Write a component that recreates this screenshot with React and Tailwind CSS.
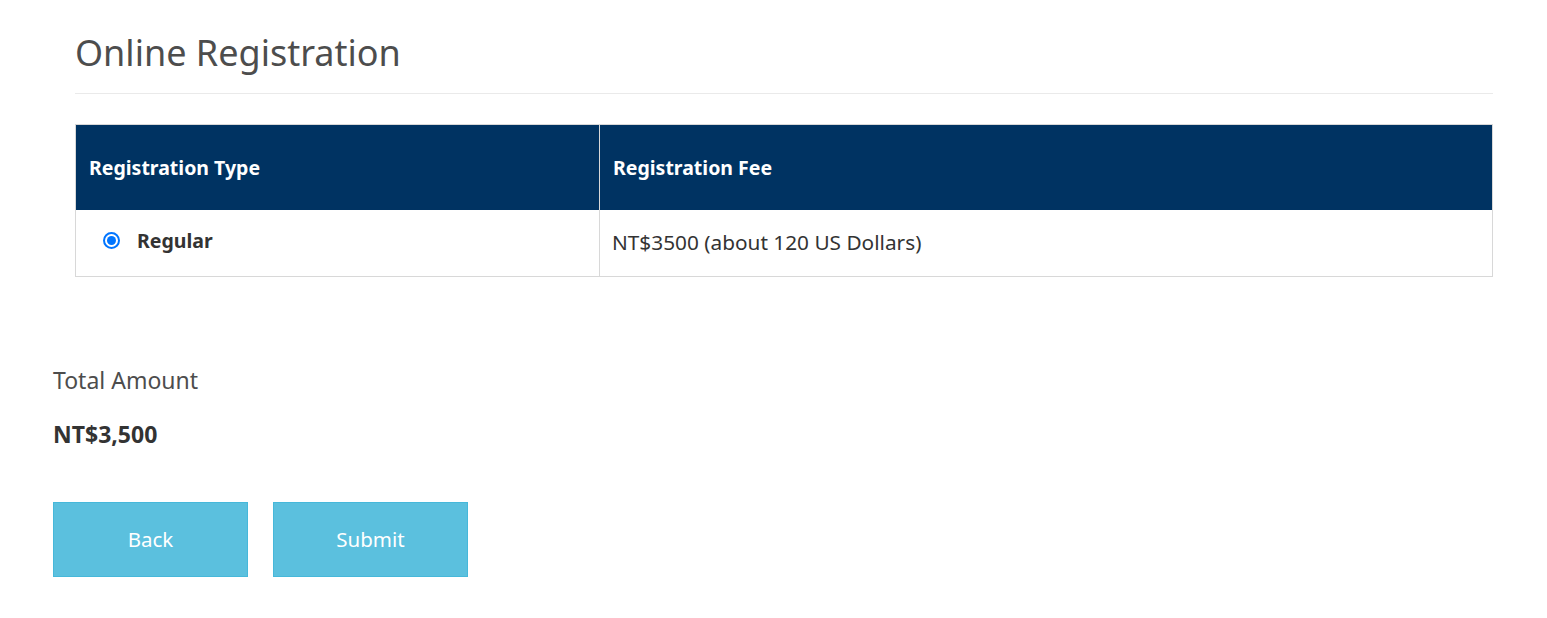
export default function App() {
  return (
    <div className="min-h-screen bg-white text-[#333] pl-[53px] pr-[54px] pt-[28px]" style={{ fontFamily: '"Noto Sans", "Open Sans", sans-serif' }}>
      <div className="pl-[22px]">
        <h1 className="text-[36px] leading-[50px] text-[#4d4d4d] pb-[15px] border-b border-[#eaeaea]">
          Online Registration
        </h1>

        <table className="w-full mt-[30px] border-collapse border border-[#d8d8d8]">
          <thead>
            <tr className="bg-[#003362] text-white h-[85px]">
              <th className="w-[524px] text-left font-bold text-[19.5px] px-[13px] border-r border-[#d8d8d8]">Registration Type</th>
              <th className="text-left font-bold text-[19.5px] px-[13px]">Registration Fee</th>
            </tr>
          </thead>
          <tbody>
            <tr className="h-[67px]">
              <td className="px-[27px] align-middle border-r border-[#d8d8d8]">
                <label className="flex items-center gap-[17px] -mt-[4px]">
                  <span className="w-[17px] h-[17px] rounded-full border-2 border-[#0075ff] flex items-center justify-center">
                    <span className="w-[9px] h-[9px] rounded-full bg-[#0075ff]"></span>
                  </span>
                  <span className="font-bold text-[19.5px] text-[#333]">Regular</span>
                </label>
              </td>
              <td className="px-[12px] text-[20.8px] text-[#333]">NT$3500 (about 120 US Dollars)</td>
            </tr>
          </tbody>
        </table>
      </div>

      <div className="mt-[87px]">
        <p className="text-[23px] text-[#4d4d4d] leading-[32px]">Total Amount</p>
        <p className="mt-[22px] text-[23px] font-bold text-[#333] leading-[32px]">NT$3,500</p>
      </div>

      <div className="flex gap-[25px] mt-[52px]">
        <button className="w-[195px] h-[75px] bg-[#5bc0de] border border-[#46b8da] text-white text-[20.5px]">Back</button>
        <button className="w-[195px] h-[75px] bg-[#5bc0de] border border-[#46b8da] text-white text-[20.5px]">Submit</button>
      </div>
    </div>
  );
}
